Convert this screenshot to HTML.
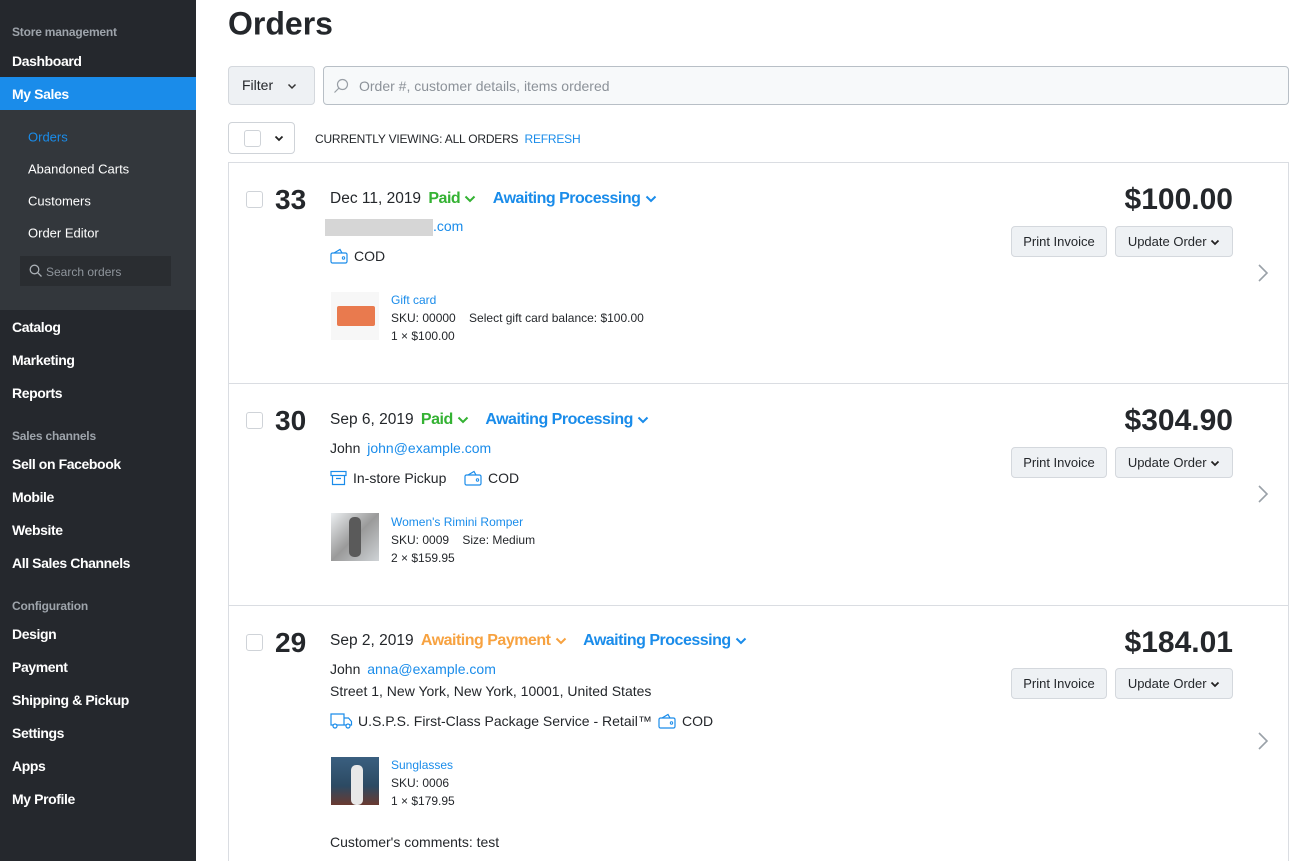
<!DOCTYPE html>
<html style="overflow:hidden;height:861px"><head><meta charset="utf-8"><style>
*{box-sizing:border-box;margin:0;padding:0}
body{width:1305px;height:861px;overflow:hidden;background:#fff;font-family:"Liberation Sans",Arial,sans-serif;color:#24272b;position:relative}
.a{position:absolute;white-space:nowrap}
#sb{position:absolute;left:0;top:0;width:196px;height:861px;background:#25282d}
.sec{color:#9ea4ab;font-size:12px;font-weight:bold;left:12px;letter-spacing:-0.2px}
.it{color:#fff;font-size:14px;font-weight:bold;left:12px;letter-spacing:-0.4px}
.sub{color:#fff;font-size:13px;left:28px}
.c{transform:translateY(-50%)}
.card{position:absolute;left:228px;width:1061px;border:1px solid #dadde2;border-top:none}
.blue{color:#1a8cea}
.cb{width:17px;height:17px;border:1px solid #cfd3d8;border-radius:3px;background:#fff}
.num{font-size:28px;font-weight:bold;left:46px}
.date{font-size:15.5px;left:101px}
.st{font-size:16px;font-weight:bold;letter-spacing:-0.5px}
.btn{height:31px;border:1px solid #d4d8dd;border-radius:4px;background:#eef1f4;font-size:13px;line-height:29px;text-align:center}
.price{font-size:30px;font-weight:bold;right:55px}
.t14{font-size:14px}
.t12{font-size:12px}
</style></head><body>
<div id="sb">
<div style="position:absolute;top:77px;left:0;width:196px;height:33px;background:#1a8cea"></div>
<div style="position:absolute;top:110px;left:0;width:196px;height:200px;background:#33373c"></div>
<div class="a sec c" style="top:32px">Store management</div>
<div class="a it c" style="top:61px">Dashboard</div>
<div class="a it c" style="top:94px">My Sales</div>
<div class="a sub c" style="top:137px;color:#1a8cea">Orders</div>
<div class="a sub c" style="top:169px">Abandoned Carts</div>
<div class="a sub c" style="top:201px">Customers</div>
<div class="a sub c" style="top:233px">Order Editor</div>
<div style="position:absolute;left:20px;top:256px;width:151px;height:30px;background:#2a2d31"></div>
<svg class="a" style="left:29px;top:264px" width="14" height="14" viewBox="0 0 14 14"><circle cx="5.5" cy="5.5" r="4.3" fill="none" stroke="#aab0b6" stroke-width="1.3"/><path d="M8.7 8.7L12.5 12.5" stroke="#aab0b6" stroke-width="1.3"/></svg>
<div class="a c" style="left:46px;top:272px;font-size:12px;color:#8f959c">Search orders</div>
<div class="a it c" style="top:327px">Catalog</div>
<div class="a it c" style="top:360px">Marketing</div>
<div class="a it c" style="top:393px">Reports</div>
<div class="a sec c" style="top:436px">Sales channels</div>
<div class="a it c" style="top:464px">Sell on Facebook</div>
<div class="a it c" style="top:497px">Mobile</div>
<div class="a it c" style="top:530px">Website</div>
<div class="a it c" style="top:563px">All Sales Channels</div>
<div class="a sec c" style="top:606px">Configuration</div>
<div class="a it c" style="top:634px">Design</div>
<div class="a it c" style="top:667px">Payment</div>
<div class="a it c" style="top:700px">Shipping &amp; Pickup</div>
<div class="a it c" style="top:733px">Settings</div>
<div class="a it c" style="top:766px">Apps</div>
<div class="a it c" style="top:799px">My Profile</div>
</div>

<div class="a c" style="left:228px;top:24px;font-size:32px;font-weight:bold">Orders</div>
<div class="a btn" style="left:228px;top:66px;width:87px;height:39px;line-height:37px;font-size:14px;text-align:left;padding-left:13px">Filter <svg style="position:absolute;left:58px;top:16px" width="10" height="7" viewBox="0 0 10 7"><path d="M1.5 1.5L5 5 8.5 1.5" fill="none" stroke="#333" stroke-width="1.5"/></svg></div>
<div class="a" style="left:323px;top:66px;width:966px;height:39px;border:1px solid #b8bfc6;border-radius:4px;background:#f7f9fa"></div>
<svg class="a" style="left:333px;top:78px" width="16" height="16" viewBox="0 0 16 16"><circle cx="9.5" cy="6.5" r="5" fill="none" stroke="#999fa6" stroke-width="1.2"/><path d="M6 10L1.5 14.5" stroke="#999fa6" stroke-width="1.2"/></svg>
<div class="a c" style="left:359px;top:86px;font-size:14px;color:#8c9299">Order #, customer details, items ordered</div>
<div class="a" style="left:228px;top:122px;width:67px;height:32px;border:1px solid #cfd3d8;border-radius:4px;background:#fff"></div>
<div class="a cb" style="left:244px;top:130px"></div>
<svg class="a" style="left:274px;top:135px" width="10" height="7" viewBox="0 0 10 7"><path d="M1.5 1.5L5 5 8.5 1.5" fill="none" stroke="#222" stroke-width="1.8"/></svg>
<div class="a c" style="left:315px;top:139px;font-size:12px;letter-spacing:-0.2px">CURRENTLY VIEWING: ALL ORDERS <span class="blue" style="margin-left:3px">REFRESH</span></div>
<div class="a" style="left:228px;top:162px;width:1061px;height:1px;background:#dadde2"></div>

<!-- card 1 -->
<div class="card" style="top:162px;height:222px;border-bottom:1px solid #dadde2">
<div class="a cb" style="left:17px;top:29px"></div>
<div class="a num c" style="top:38px">33</div>
<div class="a date c" style="top:37px">Dec 11, 2019 <span class="st" style="color:#34b233;margin-left:3px">Paid</span> <svg width="12" height="8" viewBox="0 0 12 8"><path d="M1.5 1.5L6 6 10.5 1.5" fill="none" stroke="#34b233" stroke-width="2"/></svg> <span class="st blue" style="margin-left:12px">Awaiting Processing</span> <svg width="12" height="8" viewBox="0 0 12 8"><path d="M1.5 1.5L6 6 10.5 1.5" fill="none" stroke="#1a8cea" stroke-width="2"/></svg></div>
<div class="a" style="left:96px;top:57px;width:108px;height:17px;background:#d6d6d6"></div>
<div class="a c blue t14" style="left:204px;top:64px">.com</div>
<svg class="a" style="left:101px;top:86px" width="18" height="16" viewBox="0 0 18 16"><rect x="1" y="5" width="16" height="10" rx="1.5" fill="none" stroke="#1a8cea" stroke-width="1.2"/><path d="M4 5L10 1.5 12 5" fill="none" stroke="#1a8cea" stroke-width="1.2"/><circle cx="13.5" cy="10" r="1.2" fill="none" stroke="#1a8cea"/></svg>
<div class="a c t14" style="left:125px;top:94px">COD</div>
<div class="a" style="left:102px;top:130px;width:48px;height:48px;background:#f7f7f7"><div style="position:absolute;left:6px;top:14px;width:38px;height:20px;background:#e97a4e;border-radius:2px"></div></div>
<div class="a c t12 blue" style="left:162px;top:138px">Gift card</div>
<div class="a c t12" style="left:162px;top:156px">SKU: 00000 &nbsp;&nbsp; Select gift card balance: $100.00</div>
<div class="a c t12" style="left:162px;top:174px">1 × $100.00</div>
<div class="a price c" style="top:38px">$100.00</div>
<div class="a btn" style="left:782px;top:64px;width:96px">Print Invoice</div>
<div class="a btn" style="left:886px;top:64px;width:118px">Update Order <svg width="10" height="7" viewBox="0 0 10 7"><path d="M1.5 1.5L5 5 8.5 1.5" fill="none" stroke="#222" stroke-width="1.8"/></svg></div>
<svg class="a" style="left:1028px;top:101px" width="12" height="20" viewBox="0 0 12 20"><path d="M2 2L10 10 2 18" fill="none" stroke="#9aa1a8" stroke-width="1.6"/></svg>
</div>

<!-- card 2 -->
<div class="card" style="top:383px;height:223px;border-bottom:1px solid #dadde2">
<div class="a cb" style="left:17px;top:29px"></div>
<div class="a num c" style="top:38px">30</div>
<div class="a date c" style="top:37px">Sep 6, 2019 <span class="st" style="color:#34b233;margin-left:3px">Paid</span> <svg width="12" height="8" viewBox="0 0 12 8"><path d="M1.5 1.5L6 6 10.5 1.5" fill="none" stroke="#34b233" stroke-width="2"/></svg> <span class="st blue" style="margin-left:12px">Awaiting Processing</span> <svg width="12" height="8" viewBox="0 0 12 8"><path d="M1.5 1.5L6 6 10.5 1.5" fill="none" stroke="#1a8cea" stroke-width="2"/></svg></div>
<div class="a c t14" style="left:101px;top:65px">John <span class="blue" style="margin-left:3px">john@example.com</span></div>
<svg class="a" style="left:101px;top:87px" width="17" height="16" viewBox="0 0 17 16"><rect x="1" y="1.5" width="15" height="4" fill="none" stroke="#1a8cea" stroke-width="1.2"/><path d="M2.5 5.5V14.5H14.5V5.5M6 8.5H11" fill="none" stroke="#1a8cea" stroke-width="1.2"/></svg>
<div class="a c t14" style="left:124px;top:95px">In-store Pickup</div>
<svg class="a" style="left:235px;top:87px" width="18" height="16" viewBox="0 0 18 16"><rect x="1" y="5" width="16" height="10" rx="1.5" fill="none" stroke="#1a8cea" stroke-width="1.2"/><path d="M4 5L10 1.5 12 5" fill="none" stroke="#1a8cea" stroke-width="1.2"/><circle cx="13.5" cy="10" r="1.2" fill="none" stroke="#1a8cea"/></svg>
<div class="a c t14" style="left:259px;top:95px">COD</div>
<div class="a" style="left:102px;top:130px;width:48px;height:48px;background:linear-gradient(135deg,#eceff1 0%,#9a9a9a 50%,#cfd3d6 100%)"><div style="position:absolute;left:18px;top:4px;width:12px;height:40px;background:#5a5a5a;border-radius:5px"></div></div>
<div class="a c t12 blue" style="left:162px;top:139px">Women's Rimini Romper</div>
<div class="a c t12" style="left:162px;top:157px">SKU: 0009 &nbsp;&nbsp; Size: Medium</div>
<div class="a c t12" style="left:162px;top:175px">2 × $159.95</div>
<div class="a price c" style="top:38px">$304.90</div>
<div class="a btn" style="left:782px;top:64px;width:96px">Print Invoice</div>
<div class="a btn" style="left:886px;top:64px;width:118px">Update Order <svg width="10" height="7" viewBox="0 0 10 7"><path d="M1.5 1.5L5 5 8.5 1.5" fill="none" stroke="#222" stroke-width="1.8"/></svg></div>
<svg class="a" style="left:1028px;top:101px" width="12" height="20" viewBox="0 0 12 20"><path d="M2 2L10 10 2 18" fill="none" stroke="#9aa1a8" stroke-width="1.6"/></svg>
</div>

<!-- card 3 -->
<div class="card" style="top:605px;height:256px;border-bottom:none">
<div class="a cb" style="left:17px;top:29px"></div>
<div class="a num c" style="top:38px">29</div>
<div class="a date c" style="top:36px">Sep 2, 2019 <span class="st" style="color:#f7a240;margin-left:3px">Awaiting Payment</span> <svg width="12" height="8" viewBox="0 0 12 8"><path d="M1.5 1.5L6 6 10.5 1.5" fill="none" stroke="#f7a240" stroke-width="2"/></svg> <span class="st blue" style="margin-left:12px">Awaiting Processing</span> <svg width="12" height="8" viewBox="0 0 12 8"><path d="M1.5 1.5L6 6 10.5 1.5" fill="none" stroke="#1a8cea" stroke-width="2"/></svg></div>
<div class="a c t14" style="left:101px;top:64px">John <span class="blue" style="margin-left:3px">anna@example.com</span></div>
<div class="a c t14" style="left:101px;top:86px">Street 1, New York, New York, 10001, United States</div>
<svg class="a" style="left:101px;top:107px" width="23" height="17" viewBox="0 0 23 17"><path d="M1 2H14V13H1ZM14 6H18.5L21.5 9.5V13H14" fill="none" stroke="#1a8cea" stroke-width="1.2"/><circle cx="5" cy="14" r="2" fill="#fff" stroke="#1a8cea" stroke-width="1.2"/><circle cx="18" cy="14" r="2" fill="#fff" stroke="#1a8cea" stroke-width="1.2"/></svg>
<div class="a c t14" style="left:129px;top:116px">U.S.P.S. First-Class Package Service - Retail™</div>
<svg class="a" style="left:429px;top:108px" width="18" height="16" viewBox="0 0 18 16"><rect x="1" y="5" width="16" height="10" rx="1.5" fill="none" stroke="#1a8cea" stroke-width="1.2"/><path d="M4 5L10 1.5 12 5" fill="none" stroke="#1a8cea" stroke-width="1.2"/><circle cx="13.5" cy="10" r="1.2" fill="none" stroke="#1a8cea"/></svg>
<div class="a c t14" style="left:453px;top:116px">COD</div>
<div class="a" style="left:102px;top:152px;width:48px;height:48px;background:linear-gradient(180deg,#3a5f80 0%,#2c4a63 60%,#6a3a30 100%)"><div style="position:absolute;left:20px;top:8px;width:12px;height:40px;background:#e8e8e8;border-radius:5px"></div></div>
<div class="a c t12 blue" style="left:162px;top:160px">Sunglasses</div>
<div class="a c t12" style="left:162px;top:178px">SKU: 0006</div>
<div class="a c t12" style="left:162px;top:196px">1 × $179.95</div>
<div class="a c t14" style="left:101px;top:237px">Customer's comments: test</div>
<div class="a price c" style="top:38px">$184.01</div>
<div class="a btn" style="left:782px;top:63px;width:96px">Print Invoice</div>
<div class="a btn" style="left:886px;top:63px;width:118px">Update Order <svg width="10" height="7" viewBox="0 0 10 7"><path d="M1.5 1.5L5 5 8.5 1.5" fill="none" stroke="#222" stroke-width="1.8"/></svg></div>
<svg class="a" style="left:1028px;top:126px" width="12" height="20" viewBox="0 0 12 20"><path d="M2 2L10 10 2 18" fill="none" stroke="#9aa1a8" stroke-width="1.6"/></svg>
</div>
</body></html>
